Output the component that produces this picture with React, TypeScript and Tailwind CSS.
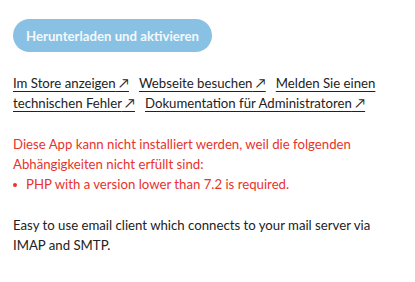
const links = [
  "Im Store anzeigen",
  "Webseite besuchen",
  "Melden Sie einen technischen Fehler",
  "Dokumentation für Administratoren",
];

export default function App() {
  return (
    <div className="w-[415px] h-[282px] bg-white px-[13px] pt-[19px] font-['Lato',sans-serif] text-[13.2px] leading-[20px] text-[#222]">
      <button
        disabled
        className="h-[33px] px-[13px] rounded-full bg-[#88c1e3] text-[#f4f8fb] font-bold text-[13.2px]"
      >
        Herunterladen und aktivieren
      </button>

      <p className="mt-[21px]">
        {links.map((l) => (
          <a key={l} href="#" className="mr-[10px] underline underline-offset-[3px]">
            {l} ↗
          </a>
        ))}
      </p>

      <div className="mt-[21px] text-[#e9322d]">
        <p>Diese App kann nicht installiert werden, weil die folgenden Abhängigkeiten nicht erfüllt sind:</p>
        <ul>
          <li className="flex items-center gap-[9px]">
            <span className="relative top-[1px] w-[4px] h-[4px] rounded-full bg-[#e9322d]" />
            PHP with a version lower than 7.2 is required.
          </li>
        </ul>
      </div>

      <p className="mt-[21px]">
        Easy to use email client which connects to your mail server via IMAP and SMTP.
      </p>
    </div>
  );
}
